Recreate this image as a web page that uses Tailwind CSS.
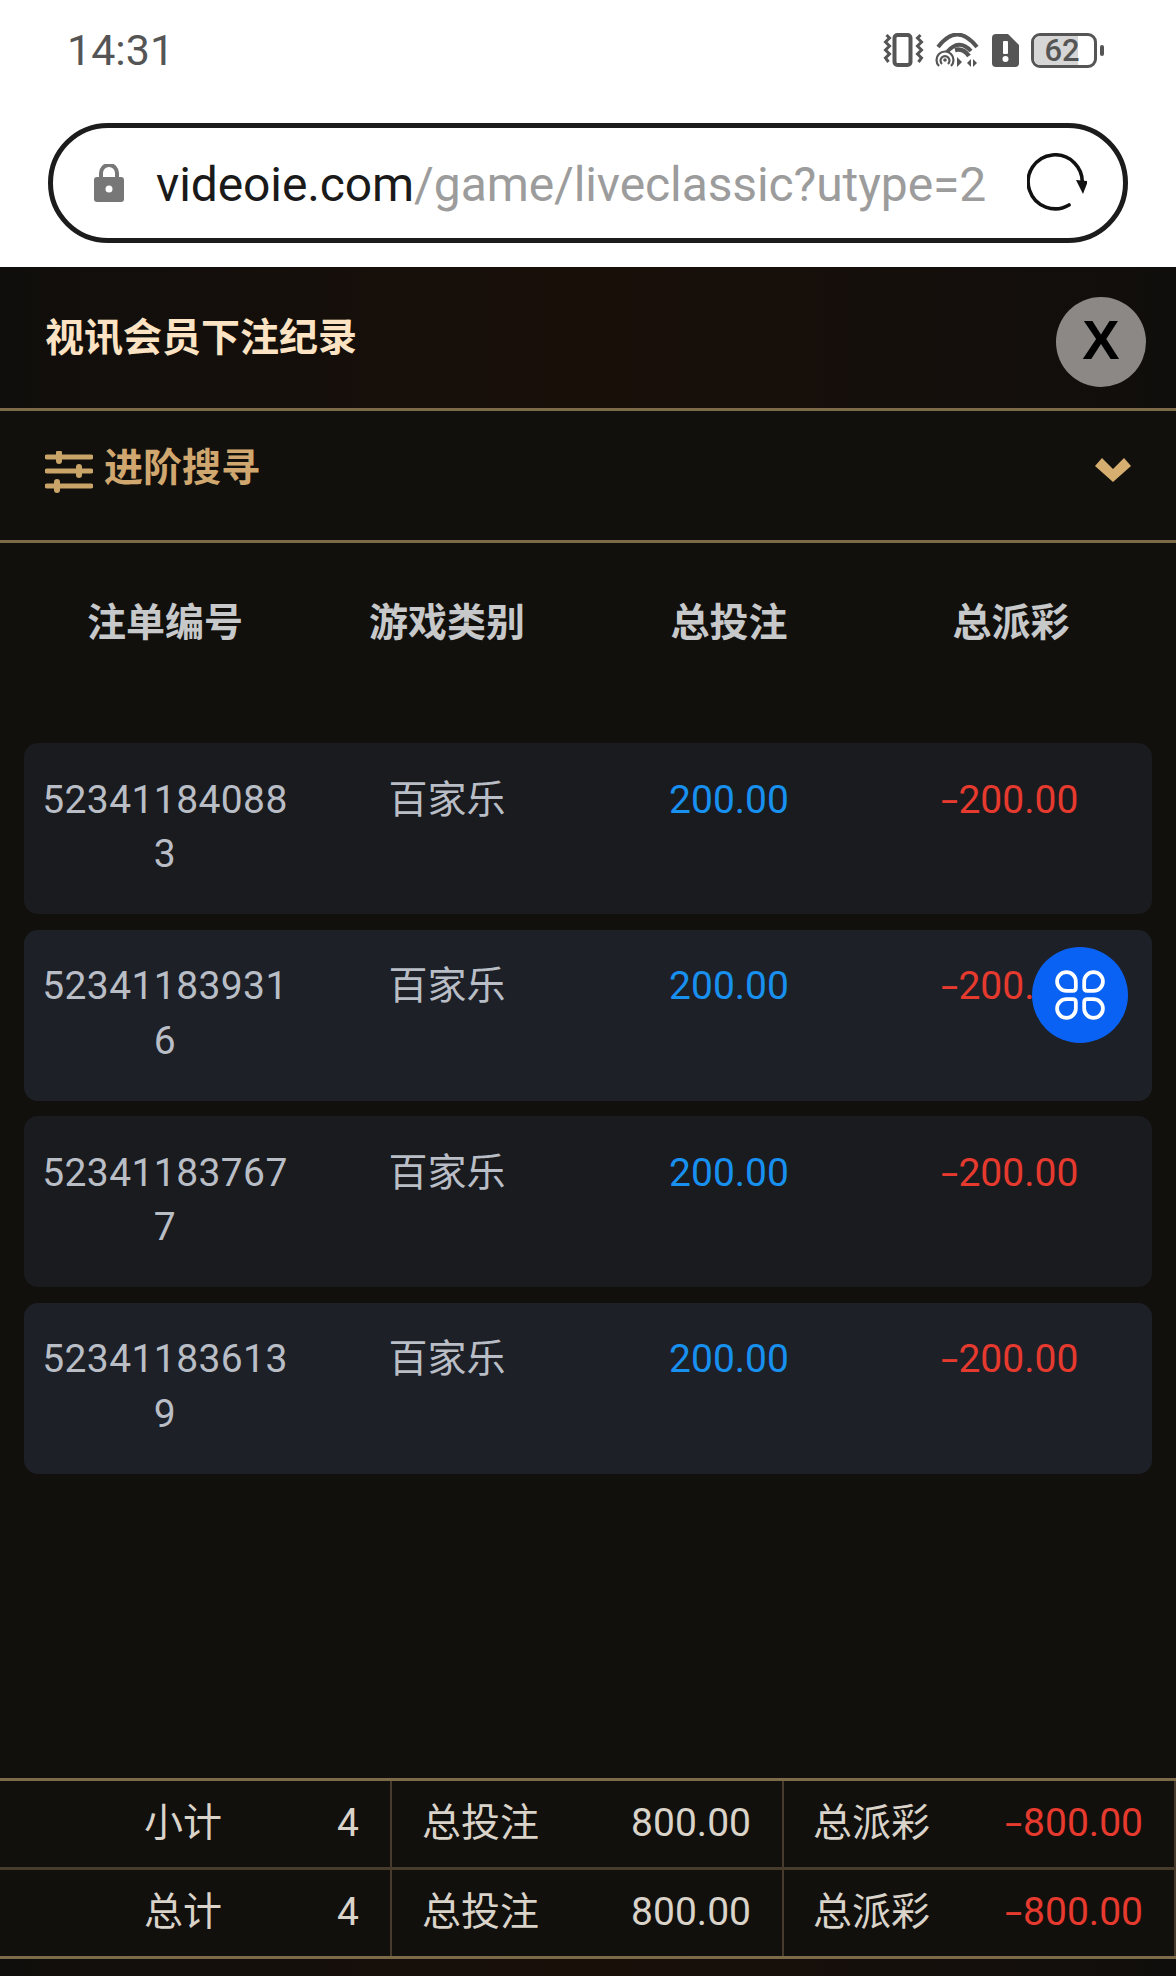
<!DOCTYPE html>
<html lang="zh">
<head>
<meta charset="utf-8">
<script src="https://cdn.jsdelivr.net/npm/@tailwindcss/browser@4"></script>
<title>视讯会员下注纪录</title>
</head>
<body class="m-0 bg-[#12100d]">
<div class="relative w-[1176px] h-[1976px] overflow-hidden flex flex-col font-['Roboto','Noto_Sans_CJK_SC',sans-serif]">

  <!-- browser chrome -->
  <div class="h-[267px] bg-white shrink-0 flex flex-col">
    <div class="h-[100px] flex items-center justify-between pl-[67px] pr-[72px]">
      <span class="text-[43px] leading-none text-[#555] mt-[1px]">14:31</span>
      <div class="flex items-center gap-[10px]">
        <svg width="43" height="34" viewBox="0 0 42 34" fill="none" stroke="#555">
          <rect x="12" y="2" width="16" height="30" rx="3" stroke-width="4"/>
          <path d="M4 2l3 3-4 4 4 4-4 4 4 4-4 4 3 4" stroke-width="3"/>
          <path d="M38 2l-3 3 4 4-4 4 4 4-4 4 4 4-3 4" stroke-width="3"/>
        </svg>
        <svg width="45" height="35" viewBox="0 0 43 35" fill="none" stroke="#555">
          <path d="M2 14Q21-11 41 14" stroke-width="4"/>
          <path d="M11 19Q23 5 35 18" stroke-width="4"/>
          <path d="M19 17q8-2 14 6" stroke-width="4.5"/>
          <path d="M3 33a8.5 8.5 0 1 1 12 0M6 31a4.5 4.5 0 1 1 6 0" stroke-width="2.2"/>
          <circle cx="9" cy="27" r="1.8" fill="#555" stroke="none"/>
          <path d="M21 24l5 5-5 5zM35 26v8l-4-4zM37 26v8l4-4z" fill="#555" stroke="none"/>
        </svg>
        <svg width="27" height="33" viewBox="0 0 27 33" class="ml-[2px]">
          <path d="M4 0h12l11 11v18a4 4 0 0 1-4 4H4a4 4 0 0 1-4-4V4a4 4 0 0 1 4-4z" fill="#555"/>
          <rect x="11" y="7" width="5" height="13" rx="1" fill="#fff"/>
          <circle cx="13.5" cy="25" r="3" fill="#fff"/>
        </svg>
        <div class="flex items-center gap-[3px] ml-[2px]">
          <div class="relative w-[66px] h-[35px] border-[3px] border-[#555] rounded-[9px] overflow-hidden flex items-center justify-center">
            <div class="absolute left-0 top-0 bottom-0 w-[44px] bg-[#d6d6d6]"></div>
            <span class="relative text-[31px] leading-[29px] font-medium text-[#555] -ml-[4px]">62</span>
          </div>
          <div class="w-[4px] h-[11px] rounded-full bg-[#555]"></div>
        </div>
      </div>
    </div>
    <div class="mx-[48px] mt-[23px] h-[120px] rounded-full border-[5px] border-[#1c1c1c] flex items-center pl-[41px] pr-[36px]">
      <svg width="30" height="38" viewBox="0 0 30 38" class="shrink-0">
        <path d="M7 15V9a8 8 0 0 1 16 0v6" fill="none" stroke="#777" stroke-width="4"/>
        <rect x="0" y="13" width="30" height="25" rx="3" fill="#777"/>
        <circle cx="15" cy="25" r="3.5" fill="#fff"/>
      </svg>
      <div class="ml-[32px] mt-[3px] text-[48px] leading-none whitespace-nowrap tracking-[-0.1px] font-['Roboto',sans-serif]"><span class="text-[#1a1a1a]">videoie.com</span><span class="text-[#9c9c9c]">/game/liveclassic?utype=2</span></div>
      <svg width="60" height="60" viewBox="0 0 60 60" class="ml-auto shrink-0" fill="none">
        <path d="M42 52A27 27 0 1 1 55 32" stroke="#111" stroke-width="3.6" stroke-linecap="round"/>
        <path d="M49 27l12 1-5 13z" fill="#111"/>
      </svg>
    </div>
  </div>

  <!-- header -->
  <div class="h-[141px] shrink-0 flex items-center justify-between pl-[45px] pr-[30px] bg-linear-to-r from-[#100e0c] via-[#190f09] to-[#100e0c]">
    <h1 class="text-[39px] font-bold leading-none text-[#fbe3c3] mt-[1px]">视讯会员下注纪录</h1>
    <button class="w-[90px] h-[90px] mt-[8px] pb-[4px] rounded-full bg-[#8b8885] flex items-center justify-center font-['Liberation_Sans',sans-serif] font-bold text-[56px] leading-none text-black">X</button>
  </div>
  <div class="h-[3px] bg-[#7d6a48] shrink-0"></div>

  <!-- advanced search -->
  <div class="h-[129px] shrink-0 flex items-center justify-between pl-[45px] pr-[45px] pb-[10px]">
    <div class="flex items-center gap-[11px]">
      <svg width="48" height="42" viewBox="0 0 48 42" fill="none" stroke="#c9a468" stroke-width="5" stroke-linecap="round" class="mt-[3px]">
        <path d="M2 6h44M2 20h44M2 35h44"/>
        <path d="M14 2v8M34 16v8M12 31v8" stroke-width="6"/>
      </svg>
      <span class="text-[39px] font-bold leading-none text-[#cfa76f] -mt-[5px]">进阶搜寻</span>
    </div>
    <svg width="36" height="24" viewBox="0 0 36 24" class="-mt-[1px]"><path d="M0 8L7 0 18 11 29 0 36 8 18 24z" fill="#d6ae70"/></svg>
  </div>
  <div class="h-[3px] bg-[#7d6a48] shrink-0"></div>

  <!-- table -->
  <div class="flex-1 px-[24px]">
    <div class="grid grid-cols-4 h-[200px] pt-[52px] text-center text-[39px] font-bold leading-[56px] text-[#c6c8ca]">
      <div>注单编号</div><div>游戏类别</div><div>总投注</div><div>总派彩</div>
    </div>
    <div class="flex flex-col gap-[15.6px]">
      <div class="grid grid-cols-4 h-[171px] pt-[29.6px] rounded-[14px] bg-[#1a1b1e] text-center text-[39px] leading-[54.6px] text-[#b9bec6]">
        <div class="px-[16px] break-all tracking-[0.4px]">523411840883</div><div>百家乐</div><div class="text-[#1890f0]">200.00</div><div class="text-[#e63a2f]"><span class="inline-block scale-x-[1.6] pl-[1px] pr-[3px]">-</span>200.00</div>
      </div>
      <div class="grid grid-cols-4 h-[171px] pt-[29.6px] rounded-[14px] bg-[#1d2027] text-center text-[39px] leading-[54.6px] text-[#b9bec6]">
        <div class="px-[16px] break-all tracking-[0.4px]">523411839316</div><div>百家乐</div><div class="text-[#1890f0]">200.00</div><div class="text-[#e63a2f]"><span class="inline-block scale-x-[1.6] pl-[1px] pr-[3px]">-</span>200.00</div>
      </div>
      <div class="grid grid-cols-4 h-[171px] pt-[29.6px] rounded-[14px] bg-[#1a1b1e] text-center text-[39px] leading-[54.6px] text-[#b9bec6]">
        <div class="px-[16px] break-all tracking-[0.4px]">523411837677</div><div>百家乐</div><div class="text-[#1890f0]">200.00</div><div class="text-[#e63a2f]"><span class="inline-block scale-x-[1.6] pl-[1px] pr-[3px]">-</span>200.00</div>
      </div>
      <div class="grid grid-cols-4 h-[171px] pt-[29.6px] rounded-[14px] bg-[#1d2027] text-center text-[39px] leading-[54.6px] text-[#b9bec6]">
        <div class="px-[16px] break-all tracking-[0.4px]">523411836139</div><div>百家乐</div><div class="text-[#1890f0]">200.00</div><div class="text-[#e63a2f]"><span class="inline-block scale-x-[1.6] pl-[1px] pr-[3px]">-</span>200.00</div>
      </div>
    </div>
  </div>

  <!-- totals -->
  <div class="shrink-0 border-t-[3px] border-b-[3px] border-[#7d6a48] text-[39px] leading-none text-[#d9d3c9]">
    <div class="flex h-[89px] border-b-[3px] border-[#473c2b]">
      <div class="w-[392px] flex items-center justify-between pl-[144px] pr-[31px] pb-[2px] border-r-[2px] border-[#473c2b]"><span>小计</span><span>4</span></div>
      <div class="w-[392px] flex items-center justify-between pl-[30px] pr-[31px] pb-[2px] border-r-[2px] border-[#473c2b]"><span>总投注</span><span>800.00</span></div>
      <div class="flex-1 flex items-center justify-between pl-[29px] pr-[31px] pb-[2px] border-r-[2px] border-[#473c2b]"><span>总派彩</span><span class="text-[#e63a2f]"><span class="inline-block scale-x-[1.6] pl-[1px] pr-[3px]">-</span>800.00</span></div>
    </div>
    <div class="flex h-[86px]">
      <div class="w-[392px] flex items-center justify-between pl-[144px] pr-[31px] pb-[2px] border-r-[2px] border-[#473c2b]"><span>总计</span><span>4</span></div>
      <div class="w-[392px] flex items-center justify-between pl-[30px] pr-[31px] pb-[2px] border-r-[2px] border-[#473c2b]"><span>总投注</span><span>800.00</span></div>
      <div class="flex-1 flex items-center justify-between pl-[29px] pr-[31px] pb-[2px] border-r-[2px] border-[#473c2b]"><span>总派彩</span><span class="text-[#e63a2f]"><span class="inline-block scale-x-[1.6] pl-[1px] pr-[3px]">-</span>800.00</span></div>
    </div>
  </div>
  <div class="h-[17px] shrink-0 bg-linear-to-r from-[#100e0c] via-[#190f09] to-[#100e0c]"></div>

  <!-- floating button -->
  <div class="absolute left-[1032px] top-[947px] w-[96px] h-[96px] rounded-full bg-[#0a62f5] flex items-center justify-center">
    <svg width="50" height="50" viewBox="0 0 48 48" fill="none" stroke="#fff" stroke-width="3.6">
      <path d="M2 11a9 9 0 0 1 18 0v6q0 3-3 3h-6a9 9 0 0 1-9-9z"/>
      <path transform="rotate(90 24 24)" d="M2 11a9 9 0 0 1 18 0v6q0 3-3 3h-6a9 9 0 0 1-9-9z"/>
      <path transform="rotate(180 24 24)" d="M2 11a9 9 0 0 1 18 0v6q0 3-3 3h-6a9 9 0 0 1-9-9z"/>
      <path transform="rotate(270 24 24)" d="M2 11a9 9 0 0 1 18 0v6q0 3-3 3h-6a9 9 0 0 1-9-9z"/>
    </svg>
  </div>
</div>
</body>
</html>
